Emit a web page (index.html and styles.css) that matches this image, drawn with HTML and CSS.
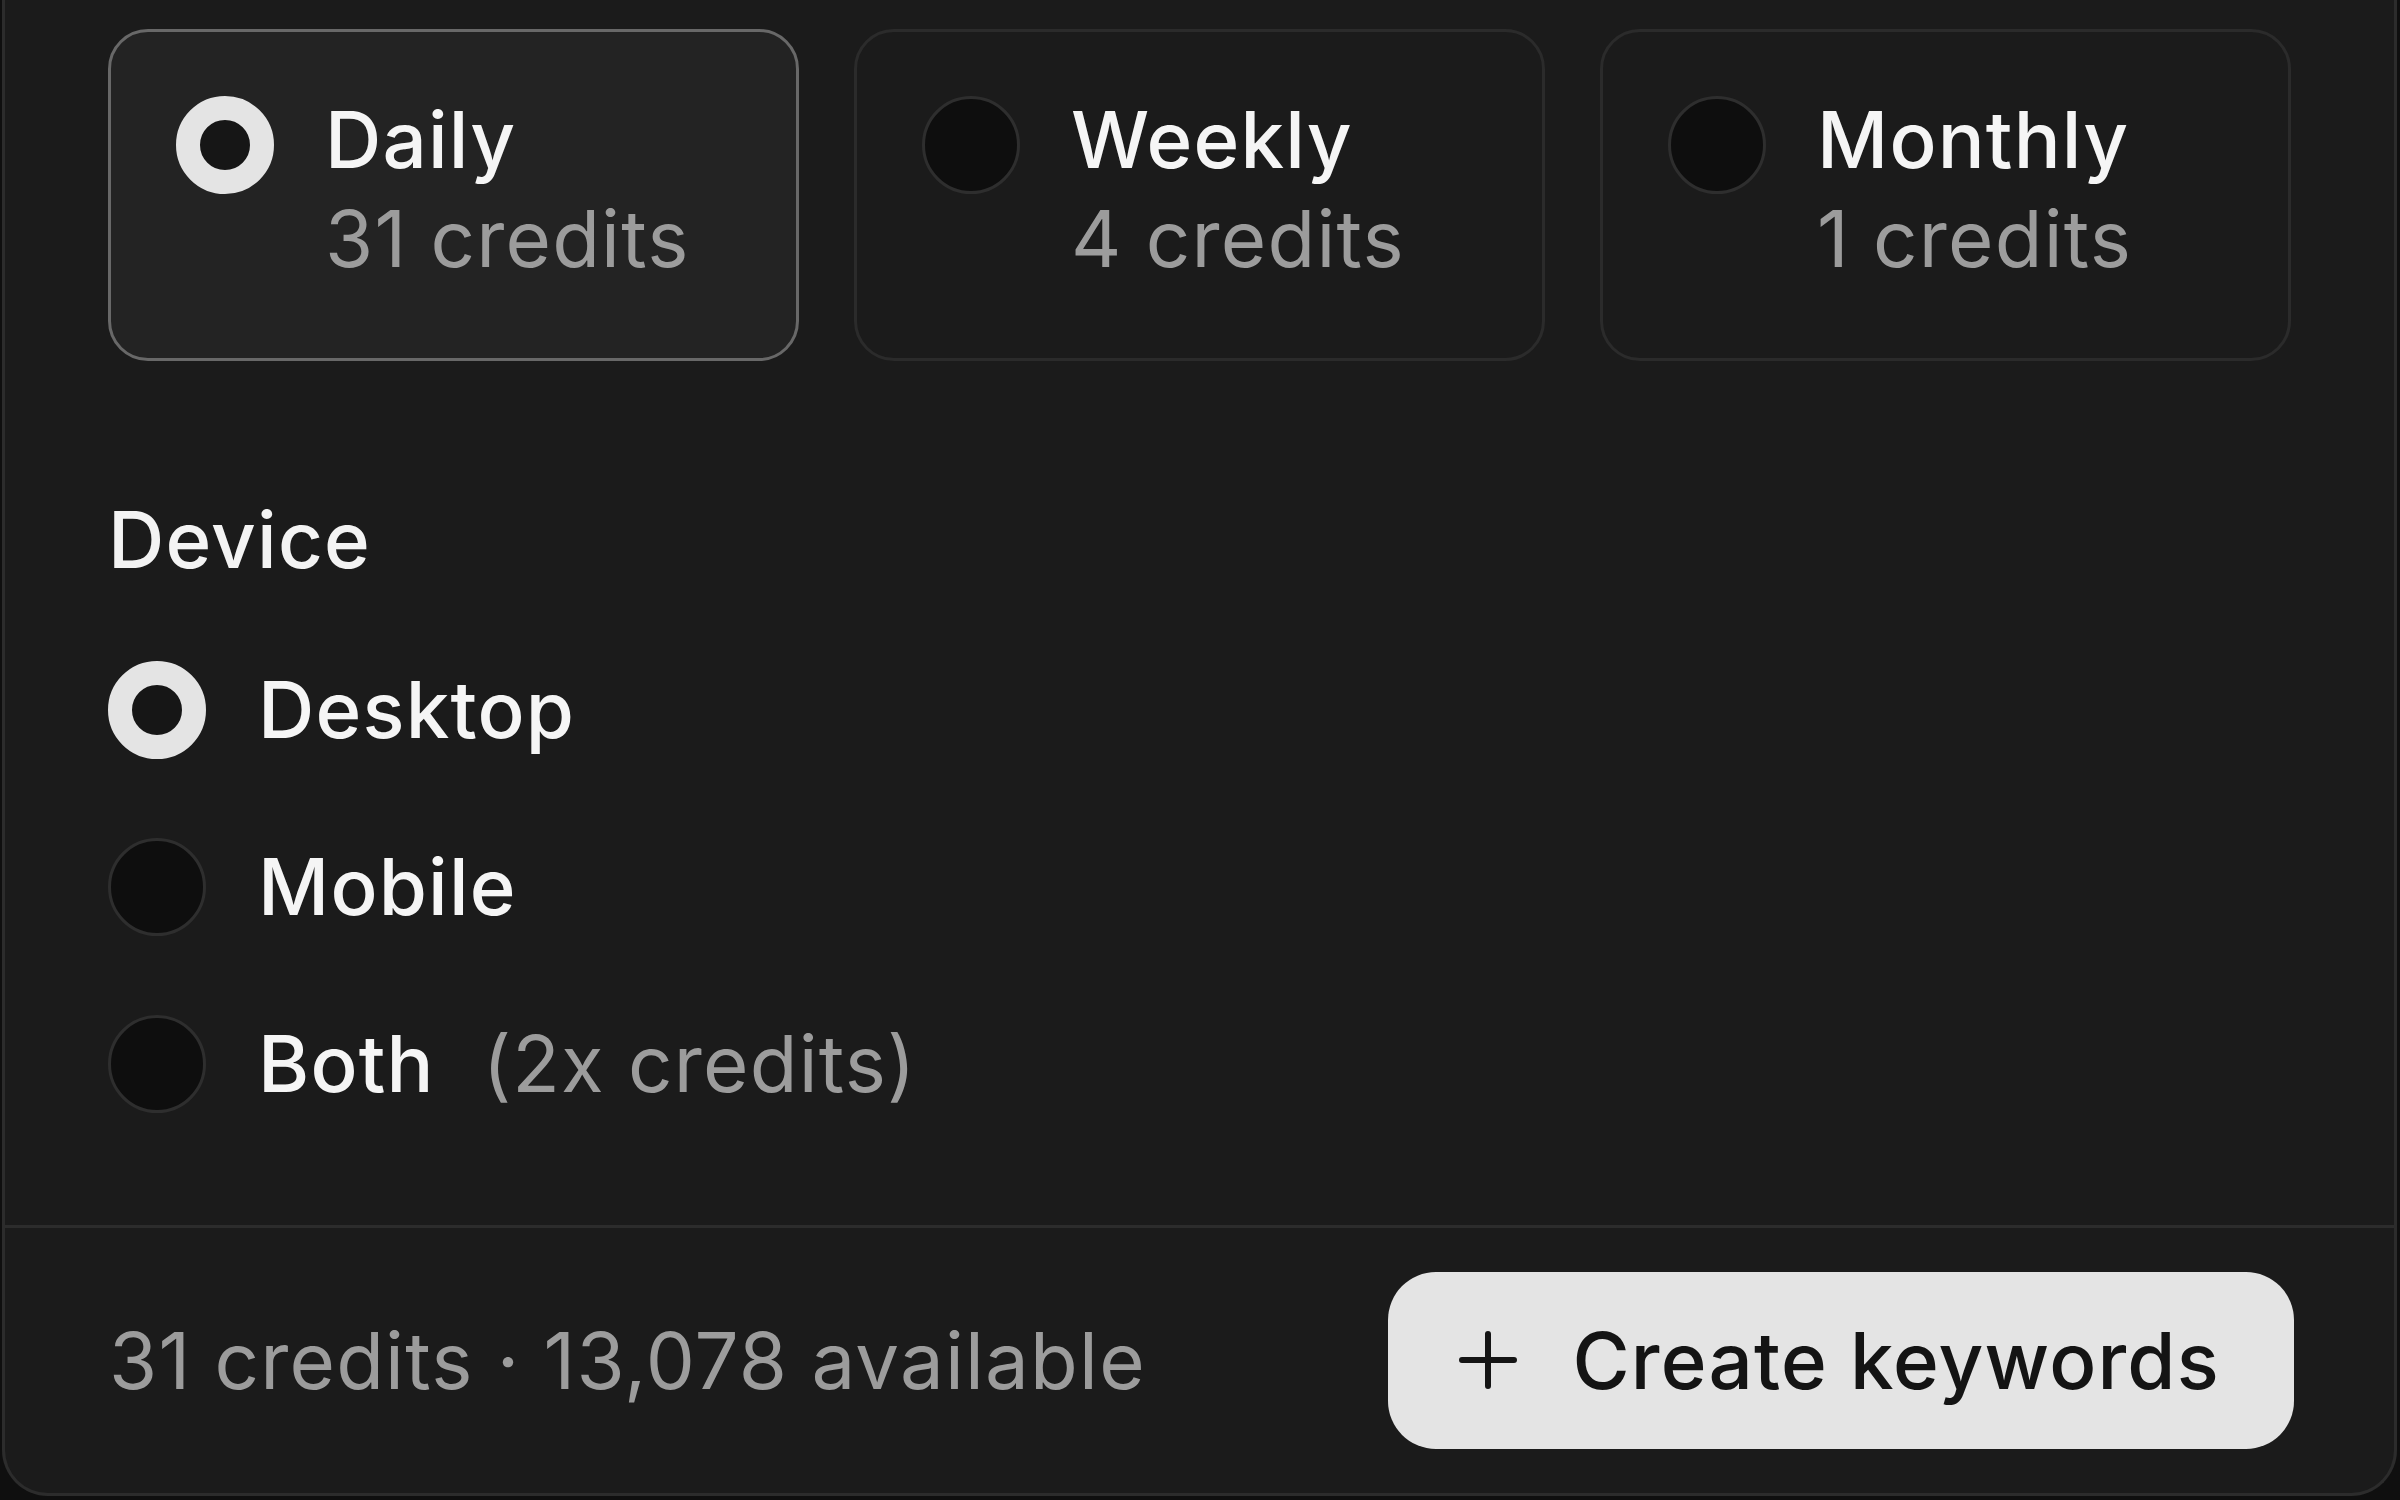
FILE: index.html
```html
<!DOCTYPE html>
<html lang="en">
<head>
<meta charset="utf-8">
<title>Create keywords</title>
<link rel="stylesheet" href="styles.css">
</head>
<body>
  <div class="panel">
    <div class="panel-body">
      <div class="freq-grid">
        <div class="freq-card is-selected">
          <span class="radio is-on"></span>
          <div class="freq-text">
            <div class="freq-title">Daily</div>
            <div class="freq-sub">31 credits</div>
          </div>
        </div>
        <div class="freq-card">
          <span class="radio"></span>
          <div class="freq-text">
            <div class="freq-title">Weekly</div>
            <div class="freq-sub">4 credits</div>
          </div>
        </div>
        <div class="freq-card">
          <span class="radio"></span>
          <div class="freq-text">
            <div class="freq-title">Monthly</div>
            <div class="freq-sub">1 credits</div>
          </div>
        </div>
      </div>

      <div class="section-label">Device</div>
      <div class="option-list">
        <div class="option">
          <span class="radio is-on"></span>
          <span class="option-label">Desktop</span>
        </div>
        <div class="option">
          <span class="radio"></span>
          <span class="option-label">Mobile</span>
        </div>
        <div class="option">
          <span class="radio"></span>
          <span class="option-label">Both<span class="option-note">(2x credits)</span></span>
        </div>
      </div>
    </div>

    <div class="panel-footer">
      <div class="footer-info">31 credits · 13,078 available</div>
      <button class="btn-create">
        <svg class="btn-icon" viewBox="0 0 58 58" width="58" height="58" aria-hidden="true">
          <path d="M29 3v52M3 29h52" fill="none" stroke="#141414" stroke-width="6" stroke-linecap="round"/>
        </svg>
        <span>Create keywords</span>
      </button>
    </div>
  </div>
</body>
</html>
```

FILE: styles.css
```css
* {
  box-sizing: border-box;
}

html, body {
  margin: 0;
  padding: 0;
}

body {
  background: #0f0f0f;
  height: 1500px;
  overflow: hidden;
  font-family: Inter, "Noto Sans", "Liberation Sans", sans-serif;
  letter-spacing: 1.2px;
  color: #f3f3f3;
  padding: 0 3px 3px 2px;
}

.panel {
  background: #1b1b1b;
  border: 3px solid #2c2c2c;
  border-top: 0;
  border-radius: 0 0 46px 46px;
}

.panel-body {
  padding: 29px 103px 112px 103px;
}

.freq-grid {
  display: grid;
  grid-template-columns: repeat(3, 1fr);
  gap: 55px;
}

.freq-card {
  display: flex;
  align-items: flex-start;
  gap: 51px;
  padding: 58px 40px 70px 65px;
  border: 3px solid #2b2b2b;
  border-radius: 40px;
  background: #1b1b1b;
}

.freq-card.is-selected {
  background: #232323;
  border-color: #686868;
}

.freq-card .radio {
  margin-top: 6px;
}

.radio {
  flex: none;
  width: 98px;
  height: 98px;
  border-radius: 50%;
  background: #0e0e0e;
  border: 3px solid #2e2e2e;
}

.radio.is-on {
  background: #161616;
  border: 24.5px solid #e4e4e4;
}

.freq-text {
  font-size: 78px;
  line-height: 99px;
}

.freq-title {
  font-weight: 500;
  color: #f5f5f5;
}

.freq-sub {
  font-weight: 400;
  color: #9c9c9c;
}

.section-label {
  margin-top: 132px;
  font-size: 78px;
  line-height: 1.2;
  font-weight: 500;
  color: #f3f3f3;
}

.option-list {
  margin-top: 74px;
  display: flex;
  flex-direction: column;
  gap: 79px;
}

.option {
  display: flex;
  align-items: center;
  gap: 52px;
}

.option-label {
  font-size: 78px;
  line-height: 1.2;
  font-weight: 500;
  color: #f5f5f5;
}

.option-note {
  margin-left: 48px;
  font-weight: 400;
  color: #9c9c9c;
}

.panel-footer {
  border-top: 3px solid #2c2c2c;
  height: 268px;
  padding: 0 100px 0 104px;
  display: flex;
  align-items: center;
  justify-content: space-between;
}

.footer-info {
  font-size: 78px;
  font-weight: 400;
  color: #9c9c9c;
}

.btn-create {
  display: flex;
  align-items: center;
  gap: 55px;
  height: 177px;
  padding: 0 74px 0 71px;
  border: 0;
  border-radius: 48px;
  background: #e4e4e4;
  color: #141414;
  font-family: inherit;
  letter-spacing: inherit;
  font-size: 78px;
  font-weight: 500;
  cursor: pointer;
}

.btn-icon {
  flex: none;
  display: block;
}
```
